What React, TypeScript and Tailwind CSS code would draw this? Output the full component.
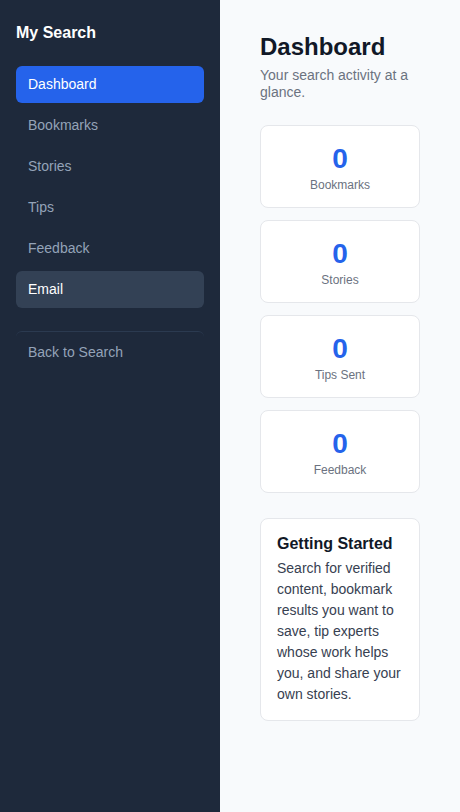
import type { ReactElement } from 'react';

// ============================================================================
// Data
// ============================================================================

const navItems = [
  { label: 'Dashboard', state: 'active' },
  { label: 'Bookmarks', state: 'idle' },
  { label: 'Stories', state: 'idle' },
  { label: 'Tips', state: 'idle' },
  { label: 'Feedback', state: 'idle' },
  { label: 'Email', state: 'hover' },
];

const stats = [
  { value: 0, label: 'Bookmarks' },
  { value: 0, label: 'Stories' },
  { value: 0, label: 'Tips Sent' },
  { value: 0, label: 'Feedback' },
];

// ============================================================================
// Sidebar
// ============================================================================

function Sidebar(): ReactElement {
  return (
    <aside className="w-[220px] shrink-0 bg-[#1e293b] px-4 pt-[21px]">
      <h2 className="text-base font-bold leading-6 text-white">My Search</h2>
      <nav className="mt-[21px] flex flex-col gap-1">
        {navItems.map((item) => (
          <a
            key={item.label}
            className={
              item.state === 'active'
                ? 'block rounded-md bg-[#2563eb] px-3 py-2 text-sm leading-[21px] text-white'
                : item.state === 'hover'
                  ? 'block rounded-md bg-[#334155] px-3 py-2 text-sm leading-[21px] text-white'
                  : 'block rounded-md px-3 py-2 text-sm leading-[21px] text-[#94a3b8]'
            }
          >
            {item.label}
          </a>
        ))}
      </nav>
      <div className="mt-[23px] rounded-md border-t border-[#2b3a50] pt-[2px]">
        <a className="block px-3 py-2 text-sm leading-[21px] text-[#94a3b8]">Back to Search</a>
      </div>
    </aside>
  );
}

// ============================================================================
// Main
// ============================================================================

function StatCard({ value, label }: { value: number; label: string }): ReactElement {
  return (
    <div className="flex flex-col items-center rounded-lg border border-[#e5e7eb] bg-white px-4 pb-[14px] pt-4">
      <span className="text-[28px] font-bold leading-[34px] text-[#2563eb]">{value}</span>
      <span className="mt-[1px] text-xs leading-4 text-[#6b7280]">{label}</span>
    </div>
  );
}

export default function App(): ReactElement {
  return (
    <div
      className="flex min-h-[812px] w-[460px]"
      style={{ fontFamily: '"Liberation Sans", Arial, sans-serif' }}
    >
      <Sidebar />
      <main className="flex-1 bg-[#f8fafc] px-10 pt-8">
        <h1 className="text-2xl font-bold leading-[29px] text-[#111827]">Dashboard</h1>
        <p className="mt-[6px] text-sm leading-[17px] text-[#6b7280]">
          Your search activity at a glance.
        </p>

        <div className="mt-6 flex flex-col gap-3">
          {stats.map((s) => (
            <StatCard key={s.label} value={s.value} label={s.label} />
          ))}
        </div>

        <div className="mt-[25px] rounded-lg border border-[#e5e7eb] bg-white px-4 pb-[15px] pt-[15px]">
          <h3 className="text-base font-bold leading-[20px] text-[#111827]">Getting Started</h3>
          <p className="mt-[4px] text-sm leading-[21px] text-[#374151]">
            Search for verified content, bookmark results you want to save, tip experts whose work
            helps you, and share your own stories.
          </p>
        </div>
      </main>
    </div>
  );
}
